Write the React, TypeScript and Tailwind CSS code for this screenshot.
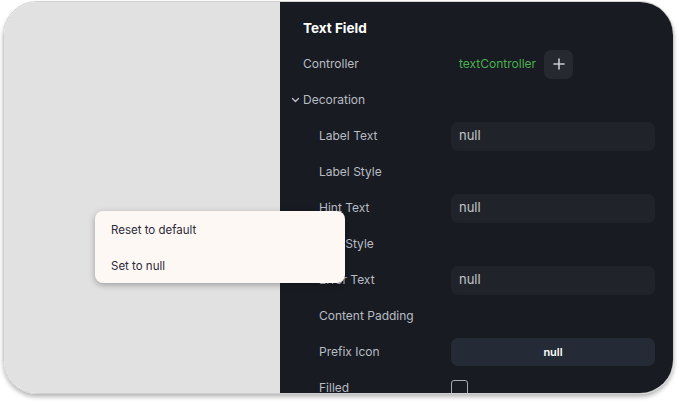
import React from 'react';

/** One property row in the inspector panel. */
const Row: React.FC<{ label: string; nested?: boolean; children?: React.ReactNode }> = ({ label, nested, children }) => (
    <div className="flex h-9 items-center pr-[18px]">
        <div className={`w-[171px] shrink-0 text-[12px] text-[#b9bcc3] ${nested ? 'pl-[39px]' : 'pl-[23px]'}`}>{label}</div>
        <div className="flex flex-1 items-center">{children}</div>
    </div>
);

const NullInput = () => (
    <div className="flex h-[29px] w-full items-center rounded-[7px] bg-[#20232a] pl-2 text-[13px] text-[#c4c6cb]">null</div>
);

export default function App() {
    return (
        <div className="h-[403px] w-[679px] bg-white pl-[3px] pt-px" style={{ fontFamily: 'Inter, "Noto Sans", sans-serif' }}>
            <div className="relative flex h-[393px] w-[671px] overflow-hidden rounded-[34px] border border-[#d0d0d0] shadow-[0_3px_4px_rgba(0,0,0,0.28)]">
                <div className="w-[276px] shrink-0 bg-[#e1e1e1]" />
                <div className="flex-1 bg-[#181b22] pt-[8px]">
                    <div className="flex h-9 items-center pl-[23px] text-[13.5px] font-bold text-white">Text Field</div>
                    <Row label="Controller">
                        <span className="pl-2 text-[12px] text-[#4caf50]">textController</span>
                        <button className="ml-2 flex h-[29px] w-[29px] items-center justify-center rounded-[7px] bg-[#262930]">
                            <svg width="12" height="12" viewBox="0 0 12 12" fill="none" stroke="#c9ccd2" strokeWidth="1.6" strokeLinecap="round">
                                <path d="M6 1v10M1 6h10" />
                            </svg>
                        </button>
                    </Row>
                    <div className="flex h-9 items-center pl-[11px] text-[12px] text-[#b9bcc3]">
                        <svg width="12" height="8" viewBox="0 0 12 8" fill="none" stroke="#b9bcc3" strokeWidth="1.4" strokeLinecap="round" strokeLinejoin="round">
                            <path d="M1.5 2.5l3 3 3-3" />
                        </svg>
                        <span>Decoration</span>
                    </div>
                    <Row label="Label Text" nested><NullInput /></Row>
                    <Row label="Label Style" nested />
                    <Row label="Hint Text" nested><NullInput /></Row>
                    <Row label="Hint Style" nested />
                    <Row label="Error Text" nested><NullInput /></Row>
                    <Row label="Content Padding" nested />
                    <Row label="Prefix Icon" nested>
                        <div className="flex h-[28px] w-full items-center justify-center rounded-[7px] bg-[#252a37] text-[11px] font-semibold text-white">null</div>
                    </Row>
                    <Row label="Filled" nested>
                        <div className="h-[17px] w-[17px] rounded-[3px] border-[1.5px] border-[#a9abb0]" />
                    </Row>
                </div>
                <div className="absolute left-[91px] top-[209px] w-[250px] rounded-[8px] bg-[#fdf8f4] pt-[2px] shadow-[0_2px_6px_rgba(0,0,0,0.3)]">
                    <div className="flex h-9 items-center pl-4 text-[11.5px] text-[#2b2a38]">Reset to default</div>
                    <div className="flex h-[34px] items-center pl-4 pt-[2px] text-[11.5px] text-[#2b2a38]">Set to null</div>
                </div>
            </div>
        </div>
    );
}
